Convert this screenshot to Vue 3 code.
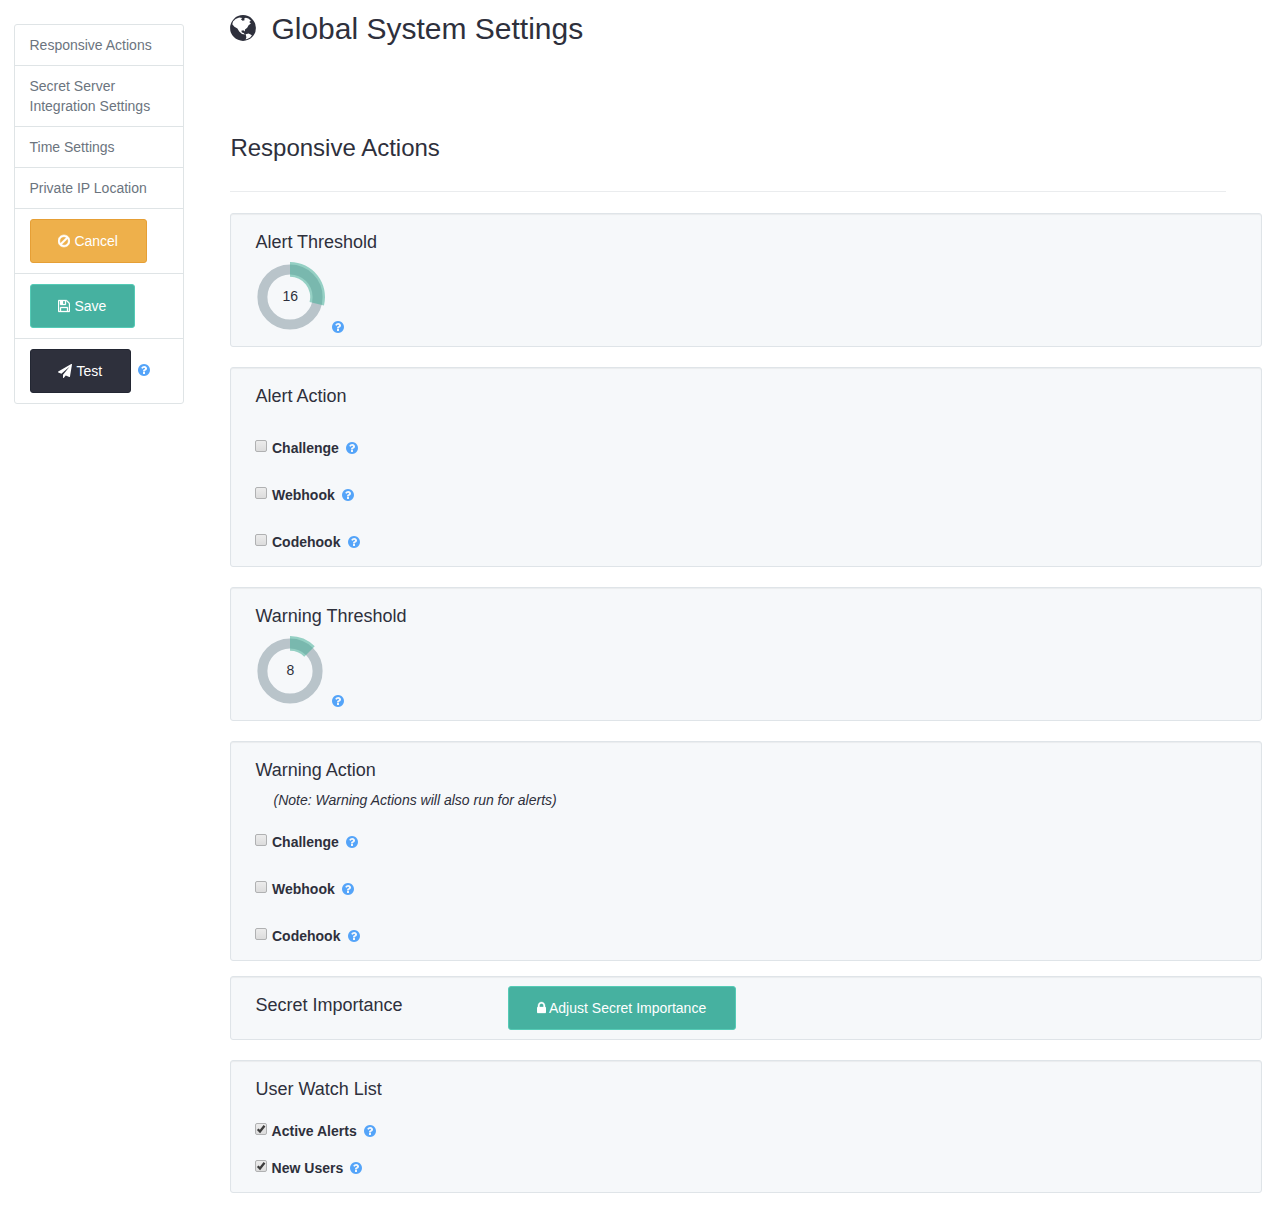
<script setup>
import { h, reactive } from 'vue'

// box is [x offset, width] of each glyph on a 1792-unit em
const glyphs = {
  help: { box: [128, 1536], d: 'M1024 1376v-192q0-14-9-23t-23-9h-192q-14 0-23 9t-9 23v192q0 14 9 23t23 9h192q14 0 23-9t9-23zm256-672q0-88-55.5-163t-138.5-116-170-41q-243 0-371 213-15 24 8 42l132 100q7 6 19 6 16 0 25-12 53-68 86-92 34-24 86-24 48 0 85.5 26t37.5 59q0 38-20 61t-68 45q-63 28-115.5 86.5t-52.5 125.5v36q0 14 9 23t23 9h192q14 0 23-9t9-23q0-19 21.5-49.5t54.5-49.5q32-18 49-28.5t46-35 44.5-48 28-60.5 12.5-81zm384 192q0 209-103 385.5t-279.5 279.5-385.5 103-385.5-103-279.5-279.5-103-385.5 103-385.5 279.5-279.5 385.5-103 385.5 103 279.5 279.5 103 385.5z' },
  ban: { box: [128, 1536], weight: 70, d: 'M1440 893q0-161-87-295l-754 753q137 89 297 89 111 0 211.5-43.5t173.5-116.5 116-174.5 43-212.5zm-999 299l755-754q-135-91-300-91-148 0-273 73t-198 199-73 274q0 162 89 299zm1223-299q0 157-61 300t-163.5 246-245 164-298.5 61-298.5-61-245-164-163.5-246-61-300 61-299.5 163.5-245.5 245-164 298.5-61 298.5 61 245 164 163.5 245.5 61 299.5z' },
  save: { box: [128, 1536], weight: 40, d: 'M512 1536h768v-384h-768v384zm896 0h128v-896q0-14-10-38.5t-20-34.5l-281-281q-10-10-34-20t-39-10v416q0 40-28 68t-68 28h-576q-40 0-68-28t-28-68v-416h-128v1280h128v-416q0-40 28-68t68-28h832q40 0 68 28t28 68v416zm-384-928v-320q0-13-9.5-22.5t-22.5-9.5h-192q-13 0-22.5 9.5t-9.5 22.5v320q0 13 9.5 22.5t22.5 9.5h192q13 0 22.5-9.5t9.5-22.5zm640 32v928q0 40-28 68t-68 28h-1344q-40 0-68-28t-28-68v-1344q0-40 28-68t68-28h928q40 0 88 20t76 48l280 280q28 28 48 76t20 88z' },
  plane: { box: [0, 1792], d: 'M1764 11q33 24 27 64l-256 1536q-5 29-32 45-14 8-31 8-11 0-24-5l-453-185-242 295q-18 23-49 23-13 0-22-4-19-7-30.5-23.5t-11.5-36.5v-349l864-1059-1069 925-395-162q-37-14-40-55-2-40 32-59l1664-960q15-9 32-9 20 0 36 11z' },
  lock: { box: [320, 1152], weight: 40, d: 'M640 768h512v-192q0-106-75-181t-181-75-181 75-75 181v192zm832 96v576q0 40-28 68t-68 28h-960q-40 0-68-28t-28-68v-576q0-40 28-68t68-28h32v-192q0-184 132-316t316-132 316 132 132 316v192h32q40 0 68 28t28 68z' }
}

const Icon = (props) => {
  const { box, d, weight } = glyphs[props.name]
  return h('svg', {
    viewBox: `${box[0]} 0 ${box[1]} 1792`,
    width: (box[1] / 1792) * 14,
    height: 14,
    fill: 'currentColor',
    stroke: 'currentColor',
    'stroke-width': weight || 0,
    'aria-hidden': 'true'
  }, [h('path', { d })])
}
Icon.props = ['name']

const links = ['Responsive Actions', 'Secret Server Integration Settings', 'Time Settings', 'Private IP Location']

const options = (...names) => names.map((label) => ({ label, on: false }))
const state = reactive({
  alert: options('Challenge', 'Webhook', 'Codehook'),
  warning: options('Challenge', 'Webhook', 'Codehook'),
  watch: [{ label: 'Active Alerts', on: true }, { label: 'New Users', on: true }]
})

const panels = [
  { title: 'Alert Threshold', kind: 'dial', value: 16, angle: 104 },
  { title: 'Alert Action', kind: 'actions', items: state.alert },
  { title: 'Warning Threshold', kind: 'dial', value: 8, angle: 45 },
  { title: 'Warning Action', kind: 'actions', note: '(Note: Warning Actions will also run for alerts)', items: state.warning },
  { title: 'Secret Importance', kind: 'importance' },
  { title: 'User Watch List', kind: 'watch', items: state.watch }
]

function sector(angle, outer = 35, inner = 20.2) {
  const a = (angle * Math.PI) / 180
  const at = (r) => `${35 + r * Math.sin(a)} ${35 - r * Math.cos(a)}`
  return `M35 ${35 - outer}A${outer} ${outer} 0 0 1 ${at(outer)}L${at(inner)}A${inner} ${inner} 0 0 0 35 ${35 - inner}Z`
}
</script>

<template>
  <div class="page">
    <nav class="sidebar">
      <a v-for="link in links" :key="link" class="item link">{{ link }}</a>
      <div class="item"><button class="btn cancel"><Icon name="ban" />Cancel</button></div>
      <div class="item"><button class="btn primary"><Icon name="save" />Save</button></div>
      <div class="item test-row">
        <button class="btn dark"><Icon name="plane" />Test</button>
        <Icon class="help" name="help" />
      </div>
    </nav>

    <main class="content">
      <h1>
        <svg class="globe" width="26" height="26" viewBox="0 0 26 26" aria-hidden="true">
          <circle cx="13" cy="13" r="12.9" fill="#2e303c" />
          <path
            fill="#fff"
            d="M3 6.4L5.6 4L9.2 2.6L12.4 3.1L10.9 4.3L12.6 5.8L14.6 5.2L14.2 3.6L15.8 2.7L18.4 3.6L20.9 5.8L19.2 6.9L20.9 8.6L18.6 10.3L17.2 12.8L15 14.4L14.7 16.6L13.4 15.3L11.3 15.8L11.9 17.6L13.6 17.9L14.9 19.4L12 18.9L9.2 16.6L7.4 13.6L4.4 11.8L2.3 9.2ZM15.6 19.2L18.6 18.4L21.9 20.3L20.2 22.6L17.8 23.8L15.6 24.6L16.4 22.2Z"
          />
        </svg>
        Global System Settings
      </h1>
      <h2>Responsive Actions</h2>
      <hr />
      <section v-for="p in panels" :key="p.title" class="panel" :class="[p.kind, { noted: p.note }]">
        <h3>{{ p.title }}</h3>
        <div v-if="p.kind === 'dial'" class="dial-row">
          <svg width="70" height="70" viewBox="0 0 70 70">
            <circle cx="35" cy="35" r="27.6" fill="none" stroke="#b9c4ca" stroke-width="10" />
            <path :d="sector(p.angle)" fill="#45ae98" fill-opacity="0.55" />
            <text x="35.3" y="39" text-anchor="middle">{{ p.value }}</text>
          </svg>
          <Icon class="help" name="help" />
        </div>
        <button v-else-if="p.kind === 'importance'" class="btn primary adjust">
          <Icon name="lock" />Adjust Secret Importance
        </button>
        <template v-else>
          <p v-if="p.note" class="note">{{ p.note }}</p>
          <div class="checks">
            <div v-for="item in p.items" :key="item.label" class="check">
              <label>
                <span class="box">
                  <input v-model="item.on" type="checkbox" />
                  <svg v-if="item.on" width="12" height="12" viewBox="0 0 12 12">
                    <path d="M2.7 6.2L5 8.5L9.5 2.8" fill="none" stroke="#3d3d3d" stroke-width="2.3" />
                  </svg>
                </span>
                {{ item.label }}
              </label>
              <Icon class="help" name="help" />
            </div>
          </div>
        </template>
      </section>
    </main>
  </div>
</template>

<style>
body {
  background: #fff;
}
</style>

<style scoped>
.page {
  display: flex;
  align-items: flex-start;
  box-sizing: border-box;
  height: 1207px;
  padding-left: 14px;
  color: #2e303c;
  font: 14px/20px "Liberation Sans", Arial, sans-serif;
}
.page * {
  box-sizing: border-box;
}
svg {
  display: block;
  flex: none;
}

.sidebar {
  width: 170px;
  margin-top: 24px;
  border: 1px solid #dfe4e6;
  border-radius: 3px;
}
.item {
  display: block;
  padding: 10px 15px;
  color: #6b747e;
}
.link {
  padding-left: 14.5px;
}
.item + .item {
  border-top: 1px solid #dfe4e6;
}
.test-row {
  display: flex;
  align-items: center;
  gap: 7px;
}
.test-row .help {
  margin-top: -2px;
}

.btn {
  display: flex;
  align-items: center;
  gap: 4.4px;
  height: 44px;
  padding: 0 27.6px 0 27px;
  border: 1px solid;
  border-radius: 3px;
  color: #fff;
  font: inherit;
  white-space: nowrap;
}
.cancel {
  background: #eeb04b;
  border-color: #e69f35;
}
.primary {
  background: #46b1a0;
  border-color: #55cbb6;
}
.dark {
  background: #2e303c;
  border-color: #232733;
}
.help {
  color: #54a4f9;
}

.content {
  width: 1032px;
  margin-left: 46px;
}
h1,
h2,
h3,
p {
  margin: 0;
  font-weight: 400;
}
h1 {
  display: flex;
  align-items: center;
  gap: 15px;
  height: 33px;
  margin-top: 12px;
  font-size: 30px;
  line-height: 33px;
}
.globe {
  margin: -1px 0 0 0.4px;
}
h2 {
  margin-top: 90px;
  padding-left: 0.4px;
  font-size: 24px;
  line-height: 26px;
}
hr {
  width: 996px;
  margin: 30px 0 21px;
  border: 0;
  border-top: 1px solid #eaecee;
}
.panel {
  margin-bottom: 20px;
  padding: 18px 24px 0;
  border: 1px solid #dfe4e8;
  border-radius: 3px;
  background: #f6f8fa;
  box-shadow: inset 0 1px 1px rgba(0, 0, 0, 0.05);
}
h3 {
  padding-left: 0.4px;
  font-size: 18px;
  line-height: 20px;
}

.dial {
  height: 134px;
}
.dial-row {
  display: flex;
  align-items: flex-end;
  gap: 7px;
  margin-top: 10px;
}
.dial-row text {
  fill: #2e303c;
  font-size: 14px;
}
.dial-row .help {
  margin-bottom: -2px;
}

.actions {
  height: 200px;
}
.actions .checks {
  margin-top: 32px;
}
.actions .check + .check {
  margin-top: 27px;
}
.actions.noted {
  height: 220px;
  margin-bottom: 15px;
}
.noted .checks {
  margin-top: 22px;
}
.note {
  margin: 10px 0 0 18.5px;
  font-style: italic;
}
.check {
  display: flex;
  align-items: center;
  gap: 7.2px;
  height: 20px;
}
label {
  display: flex;
  align-items: center;
  gap: 5px;
  font-weight: 700;
}
.box {
  display: grid;
  width: 12px;
  height: 12px;
  margin-top: -4px;
}
.box > * {
  grid-area: 1 / 1;
}
.box input {
  width: 12px;
  height: 12px;
  margin: 0;
  appearance: none;
  border: 1px solid #b0b1b2;
  border-radius: 2px;
  background: linear-gradient(#ececec, #dcdcdc);
}

.importance {
  display: flex;
  height: 64px;
  padding-top: 9px;
}
.importance h3 {
  width: 253px;
  margin-top: 9px;
}
.adjust {
  gap: 3px;
  padding: 0 28.4px 0 28px;
}
.watch {
  height: 133px;
  margin-bottom: 0;
}
.watch .checks {
  margin-top: 22px;
}
.watch .check + .check {
  margin-top: 17px;
}
.watch label {
  gap: 4.6px;
}
</style>
